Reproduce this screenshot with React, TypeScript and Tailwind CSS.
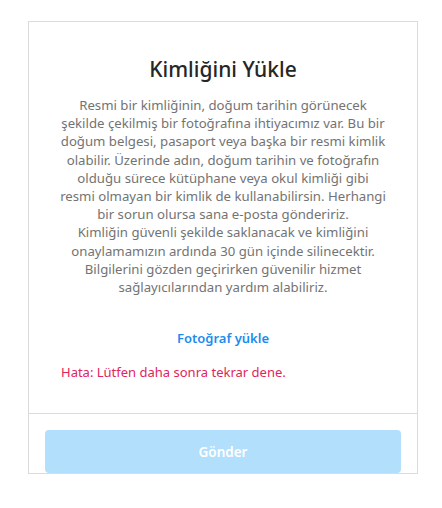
import React from "react";

export default function App() {
  const lines = [
    "Resmi bir kimliğinin, doğum tarihin görünecek",
    "şekilde çekilmiş bir fotoğrafına ihtiyacımız var. Bu bir",
    "doğum belgesi, pasaport veya başka bir resmi kimlik",
    "olabilir. Üzerinde adın, doğum tarihin ve fotoğrafın",
    "olduğu sürece kütüphane veya okul kimliği gibi",
    "resmi olmayan bir kimlik de kullanabilirsin. Herhangi",
    "bir sorun olursa sana e-posta göndeririz.",
    "Kimliğin güvenli şekilde saklanacak ve kimliğini",
    "onaylamamızın ardında 30 gün içinde silinecektir.",
    "Bilgilerini gözden geçirirken güvenilir hizmet",
    "sağlayıcılarından yardım alabiliriz.",
  ];
  return (
    <div
      className="min-h-[508px] w-[442px] bg-white pl-[28px] pt-[21px]"
      style={{ fontFamily: '"Noto Sans", "Open Sans", sans-serif' }}
    >
      <div className="flex w-[390px] flex-col overflow-hidden border border-[#dbdbdb] bg-white">
        <div className="flex flex-col px-[32px] pt-[35px]">
          <h1 className="text-center text-[21px] leading-[24px] font-medium text-[#262626]">
            Kimliğini Yükle
          </h1>
          <p className="-mx-[10px] mt-[15px] text-center text-[13.2px] leading-[18.2px] text-[#737373] whitespace-nowrap">
            {lines.map((l, i) => (
              <React.Fragment key={i}>
                {l}
                {i < lines.length - 1 && <br />}
              </React.Fragment>
            ))}
          </p>
          <button className="mt-[33px] self-center text-[13px] leading-[18px] font-semibold text-[#1a8cf0]">
            Fotoğraf yükle
          </button>
          <p className="mt-[16px] text-[13px] leading-[18px] text-[#e0245e]">
            Hata: Lütfen daha sonra tekrar dene.
          </p>
        </div>
        <div className="mt-[32px] border-t border-[#dbdbdb] px-[16px] pt-[16px]">
          <button
            disabled
            className="flex h-[43px] w-full items-center justify-center rounded-[4px] bg-[#b2dffc] text-[13.5px] font-semibold text-white"
          >
            Gönder
          </button>
        </div>
      </div>
    </div>
  );
}
